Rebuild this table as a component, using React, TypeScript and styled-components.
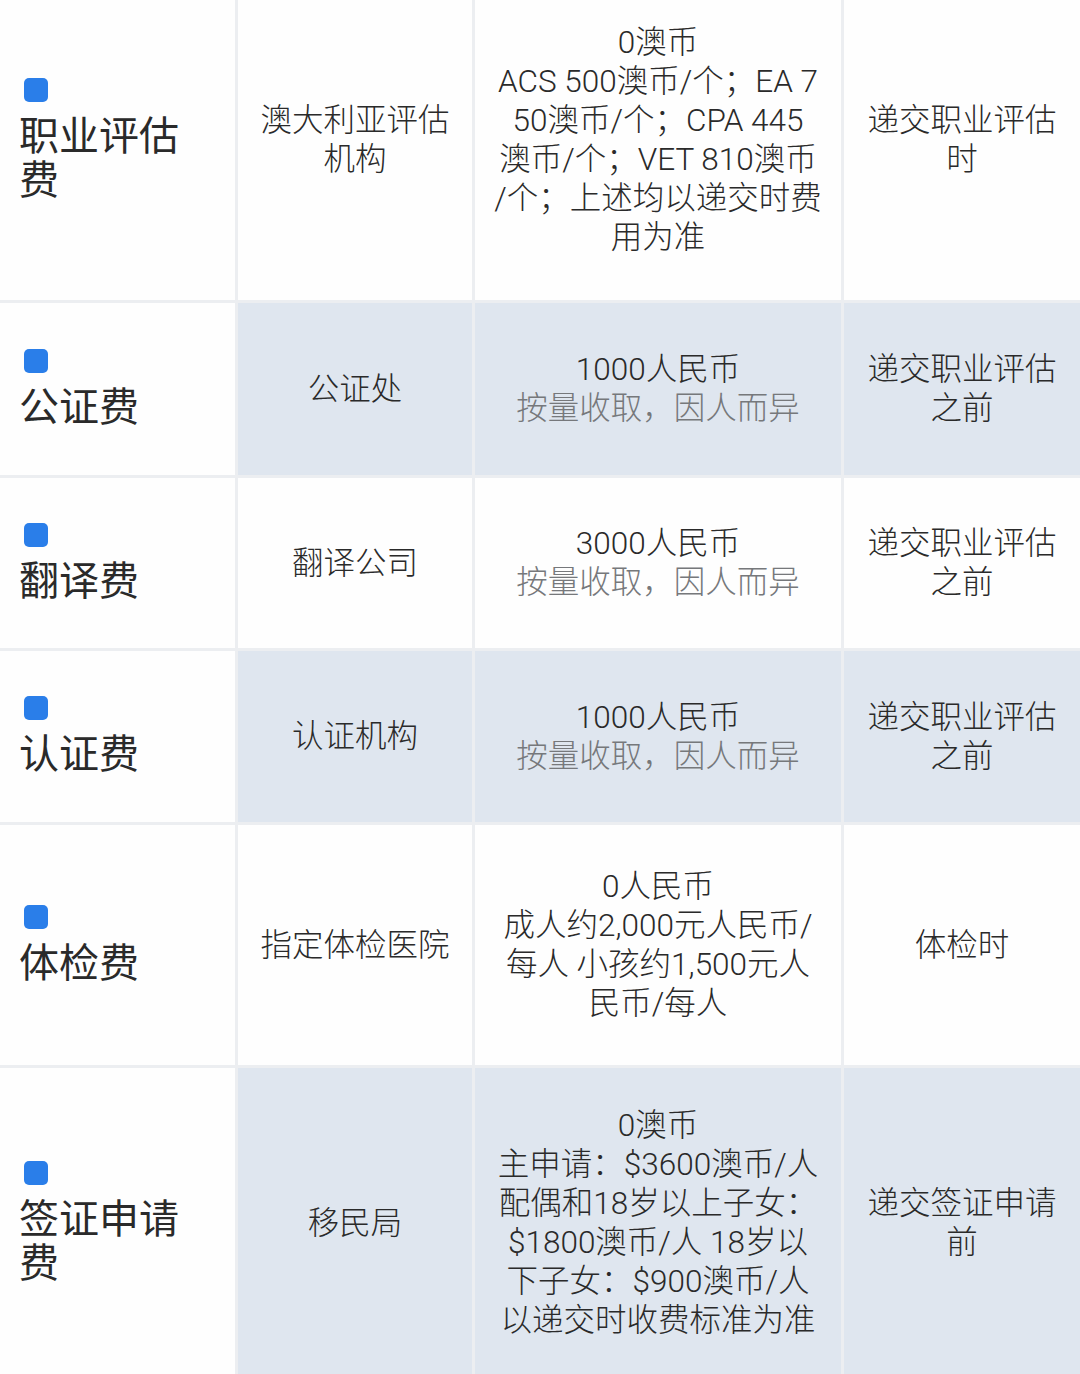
import styled, { createGlobalStyle } from 'styled-components';

const GlobalStyle = createGlobalStyle`
  html, body {
    margin: 0;
    padding: 0;
    background: #eceef1;
  }
  body {
    font-family: Roboto, "Noto Sans CJK SC", sans-serif;
    color: #2e2e2e;
    overflow: hidden;
  }
`;

const Table = styled.div`
  display: grid;
  grid-template-columns: 235px 234px 366px 236px;
  grid-template-rows: 300px 172px 170px 171px 240px 310px;
  gap: 3px;
  width: 1080px;
  height: 1374px;
  overflow: hidden;
  background: #eceef1;
`;

const Cell = styled.div<{ $shaded?: boolean; $lift?: number }>`
  display: flex;
  flex-direction: column;
  align-items: center;
  justify-content: center;
  text-align: center;
  background: ${(p) => (p.$shaded ? '#dfe6ef' : '#fefefe')};
  font-size: 31.5px;
  font-weight: 300;
  line-height: 39px;
  padding-bottom: ${(p) => p.$lift ?? 0}px;
  box-sizing: border-box;
`;

const NameCell = styled.div<{ $lift?: number }>`
  display: flex;
  flex-direction: column;
  justify-content: center;
  align-items: flex-start;
  background: #fefefe;
  padding-left: 19px;
  padding-bottom: ${(p) => p.$lift ?? 0}px;
  box-sizing: border-box;
`;

const Marker = styled.span`
  display: block;
  width: 24px;
  height: 24px;
  margin-left: 5px;
  margin-bottom: 13px;
  border-radius: 5px;
  background: #2a7ee9;
`;

const Name = styled.div`
  font-size: 40px;
  line-height: 44px;
  color: #262626;
`;

const Line = styled.span<{ $muted?: boolean }>`
  display: block;
  white-space: nowrap;
  color: ${(p) => (p.$muted ? '#76787b' : '#2a2a2a')};
`;

type Row = {
  name: string[];
  org: string[];
  fee: { text: string; muted?: boolean }[];
  when: string[];
  lift?: number;
};

const rows: Row[] = [
  {
    name: ['职业评估', '费'],
    org: ['澳大利亚评估', '机构'],
    fee: [
      { text: '0澳币' },
      { text: 'ACS 500澳币/个；EA 7' },
      { text: '50澳币/个；CPA 445' },
      { text: '澳币/个；VET 810澳币' },
      { text: '/个；上述均以递交时费' },
      { text: '用为准' },
    ],
    when: ['递交职业评估', '时'],
    lift: 20,
  },
  {
    name: ['公证费'],
    org: ['公证处'],
    fee: [{ text: '1000人民币' }, { text: '按量收取，因人而异', muted: true }],
    when: ['递交职业评估', '之前'],
  },
  {
    name: ['翻译费'],
    org: ['翻译公司'],
    fee: [{ text: '3000人民币' }, { text: '按量收取，因人而异', muted: true }],
    when: ['递交职业评估', '之前'],
  },
  {
    name: ['认证费'],
    org: ['认证机构'],
    fee: [{ text: '1000人民币' }, { text: '按量收取，因人而异', muted: true }],
    when: ['递交职业评估', '之前'],
  },
  {
    name: ['体检费'],
    org: ['指定体检医院'],
    fee: [
      { text: '0人民币' },
      { text: '成人约2,000元人民币/' },
      { text: '每人 小孩约1,500元人' },
      { text: '民币/每人' },
    ],
    when: ['体检时'],
  },
  {
    name: ['签证申请', '费'],
    org: ['移民局'],
    fee: [
      { text: '0澳币' },
      { text: '主申请：$3600澳币/人' },
      { text: '配偶和18岁以上子女：' },
      { text: '$1800澳币/人 18岁以' },
      { text: '下子女：$900澳币/人' },
      { text: '以递交时收费标准为准' },
    ],
    when: ['递交签证申请', '前'],
  },
];

export default function App() {
  return (
    <>
      <GlobalStyle />
      <Table>
        {rows.map((row, i) => {
          const shaded = i % 2 === 1;
          return [
            <NameCell key={`n${i}`} $lift={row.lift}>
              <Marker />
              <Name>
                {row.name.map((t) => (
                  <Line key={t}>{t}</Line>
                ))}
              </Name>
            </NameCell>,
            <Cell key={`o${i}`} $shaded={shaded} $lift={row.lift}>
              {row.org.map((t) => (
                <Line key={t}>{t}</Line>
              ))}
            </Cell>,
            <Cell key={`f${i}`} $shaded={shaded} $lift={row.lift}>
              {row.fee.map((l) => (
                <Line key={l.text} $muted={l.muted}>
                  {l.text}
                </Line>
              ))}
            </Cell>,
            <Cell key={`w${i}`} $shaded={shaded} $lift={row.lift}>
              {row.when.map((t) => (
                <Line key={t}>{t}</Line>
              ))}
            </Cell>,
          ];
        })}
      </Table>
    </>
  );
}
